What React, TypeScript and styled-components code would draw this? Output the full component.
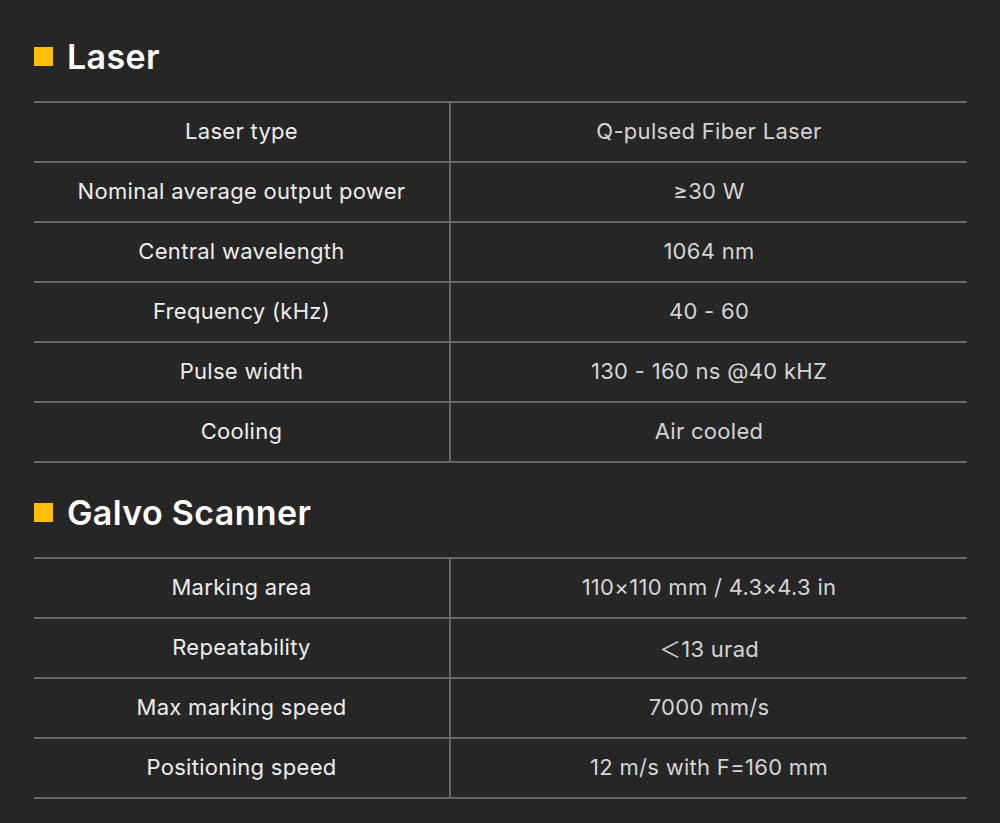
import * as React from 'react'
import styled, { createGlobalStyle } from 'styled-components'

const GlobalStyle = createGlobalStyle`
  html, body {
    margin: 0;
    padding: 0;
    background: #262626;
  }
  body {
    font-family: Inter, "Noto Sans CJK SC", "Noto Sans", "Liberation Sans", sans-serif;
    -webkit-font-smoothing: antialiased;
  }
`

const Page = styled.div`
  width: 1000px;
  height: 823px;
  box-sizing: border-box;
  padding: 34px 33px 0 34px;
  background: #262626;
`

const Section = styled.section`
  & + & {
    margin-top: 27px;
  }
`

const Heading = styled.h2`
  display: flex;
  align-items: center;
  gap: 14px;
  height: 44px;
  margin: 0 0 23px;
  font-size: 34px;
  font-weight: 600;
  color: #ffffff;
  letter-spacing: 0.35px;
`

const Marker = styled.span`
  width: 19px;
  height: 19px;
  background: #fcbf0a;
  flex-shrink: 0;
`

const Table = styled.div`
  border-top: 2px solid #666666;
`

const Row = styled.div`
  display: grid;
  grid-template-columns: 417px 1fr;
  height: 60px;
  box-sizing: border-box;
  border-bottom: 2px solid #666666;
`

const Cell = styled.div<{ $key?: boolean }>`
  display: flex;
  align-items: center;
  justify-content: center;
  font-size: 22px;
  font-weight: 400;
  letter-spacing: 0.3px;
  color: ${(p) => (p.$key ? '#ededed' : '#d4d4d4')};
  border-right: ${(p) => (p.$key ? '2px solid #666666' : 'none')};
  padding-bottom: 2px;
`

type Spec = [string, string]

const laser: Spec[] = [
  ['Laser type', 'Q-pulsed Fiber Laser'],
  ['Nominal average output power', '≥30 W'],
  ['Central wavelength', '1064 nm'],
  ['Frequency (kHz)', '40 - 60'],
  ['Pulse width', '130 - 160 ns @40 kHZ'],
  ['Cooling', 'Air cooled'],
]

const galvo: Spec[] = [
  ['Marking area', '110×110 mm / 4.3×4.3 in'],
  ['Repeatability', '＜13 urad'],
  ['Max marking speed', '7000 mm/s'],
  ['Positioning speed', '12 m/s with F=160 mm'],
]

const SpecTable = ({ title, rows }: { title: string; rows: Spec[] }) => (
  <Section>
    <Heading>
      <Marker />
      {title}
    </Heading>
    <Table>
      {rows.map(([k, v]) => (
        <Row key={k}>
          <Cell $key>{k}</Cell>
          <Cell>{v}</Cell>
        </Row>
      ))}
    </Table>
  </Section>
)

export default function App() {
  return (
    <Page>
      <GlobalStyle />
      <SpecTable title="Laser" rows={laser} />
      <SpecTable title="Galvo Scanner" rows={galvo} />
    </Page>
  )
}
